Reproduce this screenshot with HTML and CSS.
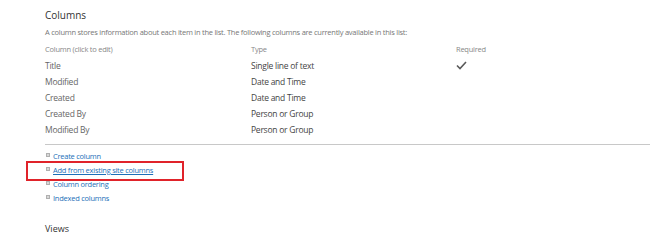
FILE: index.html
```html
<!doctype html>
<html lang="en">
<head>
	<meta charset="UTF-8">
	<title>Columns</title>
	<link rel="stylesheet" href="styles.css">
</head>
<body>
	<div class="page">
		<h3 class="title">Columns</h3>
		<p class="desc">A column stores information about each item in the list. The following columns are currently available in this list:</p>
		<div class="cols">
			<div class="row head">
				<span>Column (click to edit)</span>
				<span>Type</span>
				<span>Required</span>
			</div>
			<div class="row">
				<span>Title</span>
				<span class="type">Single line of text</span>
				<span><svg class="check" width="11" height="9" viewBox="0 0 11 9"><path d="M1 4.5 L4 7.5 L10 1" fill="none" stroke="#5a5a5a" stroke-width="1.6"/></svg></span>
			</div>
			<div class="row">
				<span>Modified</span>
				<span class="type">Date and Time</span>
				<span></span>
			</div>
			<div class="row">
				<span>Created</span>
				<span class="type">Date and Time</span>
				<span></span>
			</div>
			<div class="row">
				<span>Created By</span>
				<span class="type">Person or Group</span>
				<span></span>
			</div>
			<div class="row">
				<span>Modified By</span>
				<span class="type">Person or Group</span>
				<span></span>
			</div>
		</div>
		<ul class="links">
			<li><a href="#">Create column</a></li>
			<li class="mark"><a href="#" class="under">Add from existing site columns</a></li>
			<li><a href="#">Column ordering</a></li>
			<li><a href="#">Indexed columns</a></li>
		</ul>
		<h3 class="title views">Views</h3>
	</div>
</body>
</html>
```

FILE: styles.css
```css
body,h3,p,ul,li{
	margin: 0;
	padding: 0;
	list-style: none;
}
body{
	font-family: "Open Sans", "Noto Sans", sans-serif;
	background: #fff;
	color: #444;
	overflow: hidden;
}
.page{
	padding: 8px 0 0 45px;
}
.title{
	font-weight: normal;
	font-size: 10px;
	color: #333;
	line-height: 14px;
}
.desc{
	font-size: 7.5px;
	letter-spacing: -0.25px;
	color: #777;
	margin-top: 4px;
	line-height: 12px;
}
.cols{
	margin-top: 3px;
	border-bottom: 1px solid #c8c8c8;
	padding-bottom: 7px;
}
.row{
	display: grid;
	grid-template-columns: 206px 205px 1fr;
	height: 16px;
	align-items: center;
	font-size: 8.5px;
	letter-spacing: -0.25px;
	color: #666;
}
.row .type{
	color: #444;
}
.row.head{
	font-size: 7.5px;
	color: #888;
}
.check{
	display: block;
}
.links{
	padding-top: 4px;
}
.links li{
	height: 14px;
	line-height: 14px;
	font-size: 7.5px;
	letter-spacing: -0.25px;
	padding-left: 8px;
	position: relative;
}
.links li:before{
	content: "";
	position: absolute;
	left: 1px;
	top: 4px;
	width: 2px;
	height: 2px;
	border: 1px solid #b0b0b0;
	background: #d8d8d8;
}
.links a{
	color: #1c6fb8;
	text-decoration: none;
}
.links a.under{
	text-decoration: underline;
}
.mark:after{
	content: "";
	position: absolute;
	left: -19px;
	top: -2px;
	width: 154px;
	height: 16px;
	border: 2px solid #e0232a;
}
.views{
	margin-top: 17px;
	font-size: 9px;
}
```
